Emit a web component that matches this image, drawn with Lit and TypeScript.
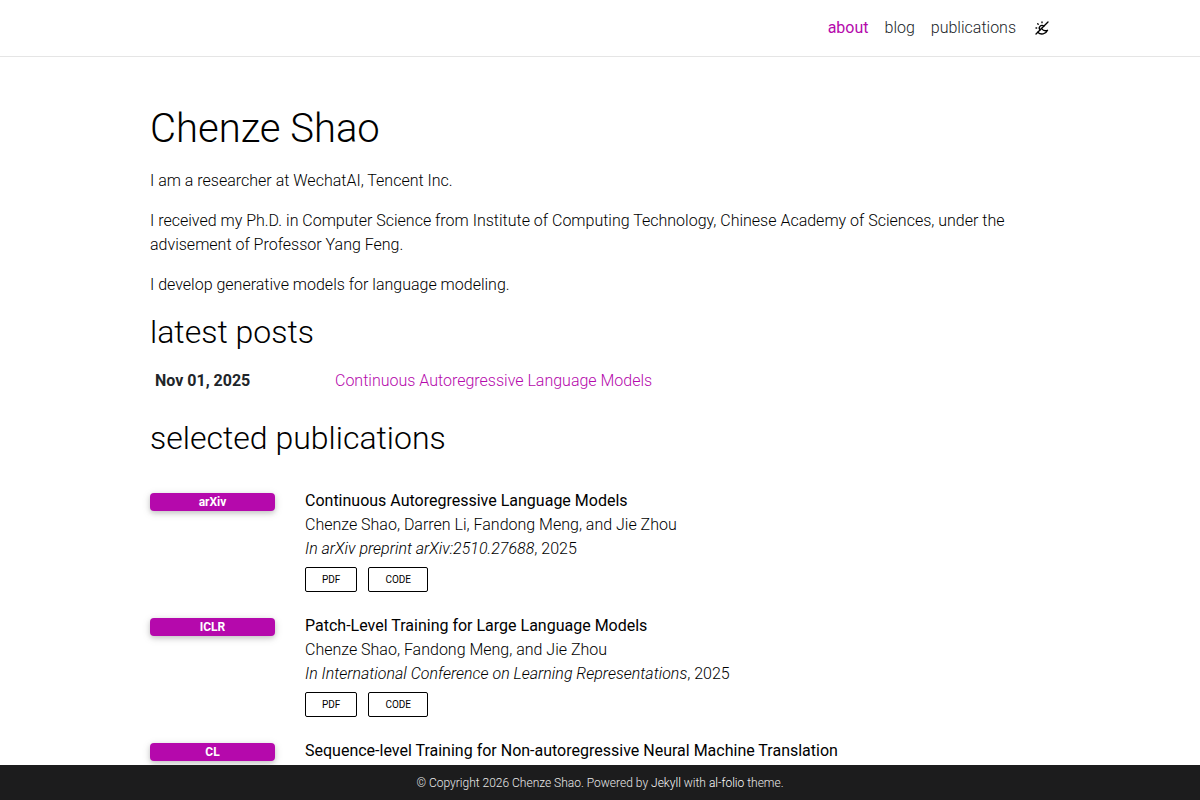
import { LitElement, html, css } from "lit";
import { customElement } from "lit/decorators.js";

interface Publication {
  badge: string;
  title: string;
  authors?: string;
  venue?: string;
  year?: string;
  links?: string[];
}

const publications: Publication[] = [
  {
    badge: "arXiv",
    title: "Continuous Autoregressive Language Models",
    authors: "Chenze Shao, Darren Li, Fandong Meng, and Jie Zhou",
    venue: "In arXiv preprint arXiv:2510.27688",
    year: "2025",
    links: ["PDF", "Code"],
  },
  {
    badge: "ICLR",
    title: "Patch-Level Training for Large Language Models",
    authors: "Chenze Shao, Fandong Meng, and Jie Zhou",
    venue: "In International Conference on Learning Representations",
    year: "2025",
    links: ["PDF", "Code"],
  },
  {
    badge: "CL",
    title: "Sequence-level Training for Non-autoregressive Neural Machine Translation",
  },
];

@customElement("app-root")
export class AppRoot extends LitElement {
  static styles = css`
    :host {
      display: block;
      min-height: 100vh;
      box-sizing: border-box;
      padding-bottom: 35px;
      background: #fff;
      color: #000;
      font: 300 16px/24px Roboto, sans-serif;
    }
    *, *::before { box-sizing: border-box; }
    a { color: #b509ac; text-decoration: none; }
    .container {
      max-width: 930px;
      margin: 0 auto;
      padding: 0 15px;
    }
    .header {
      position: sticky;
      top: 0;
      z-index: 2;
      background: #fff;
      border-bottom: 1px solid rgba(0, 0, 0, 0.1);
    }
    .nav {
      display: flex;
      justify-content: flex-end;
      align-items: center;
      gap: 16px;
      min-height: 56px;
    }
    .nav a { color: #212529; }
    .nav .active { color: #b509ac; font-weight: 400; }
    .toggle {
      display: flex;
      padding: 0;
      margin-left: 2px;
      border: 0;
      background: none;
      color: #000;
      cursor: pointer;
    }
    .toggle svg {
      width: 16px;
      height: 16px;
      fill: none;
      stroke: currentColor;
      stroke-width: 2;
      stroke-linecap: round;
      stroke-linejoin: round;
    }
    .content { padding-top: 48px; }
    h1, h2 { margin: 0; font-weight: 300; }
    h1 { font-size: 40px; line-height: 48px; margin-bottom: 16px; }
    h2 { font-size: 32px; line-height: 38px; }
    p { margin: 0 0 16px; }
    .news {
      width: 100%;
      margin: 13px 0 21px;
      border-collapse: collapse;
      table-layout: fixed;
    }
    .news th, .news td { padding: 5px; text-align: left; }
    .news th { width: 20%; color: #212529; font-weight: 700; }
    .list {
      display: grid;
      gap: 22px;
      list-style: none;
      margin: 32px 0 0;
      padding: 0;
    }
    .entry {
      display: grid;
      grid-template-columns: 125px minmax(0, 1fr);
      column-gap: 30px;
      align-items: start;
    }
    .badge {
      margin-top: 4px;
      border-radius: 4px;
      background: #b509ac;
      color: #fff;
      font-size: 12px;
      line-height: 18px;
      font-weight: 700;
      text-align: center;
      box-shadow: 0 2px 5px rgba(0, 0, 0, 0.16), 0 2px 10px rgba(0, 0, 0, 0.12);
    }
    .title { font-weight: 400; }
    .venue { font-family: "Roboto Light", Roboto, sans-serif; }
    .links { display: flex; gap: 11px; padding-top: 6px; }
    .btn {
      padding: 0 16px;
      border: 1px solid #000;
      border-radius: 2px;
      color: #000;
      font-size: 10px;
      line-height: 23px;
      font-weight: 400;
      text-transform: uppercase;
    }
    footer {
      position: fixed;
      inset: auto 0 0;
      z-index: 2;
      padding: 9px 15px 8px;
      background: #1c1c1d;
      color: #e8e8e8;
      font-size: 12px;
      line-height: 18px;
      text-align: center;
    }
    footer a { color: #fff; }
  `;

  private renderEntry(p: Publication) {
    return html`
      <li class="entry">
        <div class="badge">${p.badge}</div>
        <div>
          <div class="title">${p.title}</div>
          ${p.authors ? html`<div>${p.authors}</div>` : ""}
          ${p.venue ? html`<div><em class="venue">${p.venue}</em>, ${p.year}</div>` : ""}
          ${p.links
            ? html`<div class="links">
                ${p.links.map((l) => html`<a class="btn" href="#">${l}</a>`)}
              </div>`
            : ""}
        </div>
      </li>
    `;
  }

  render() {
    return html`
      <header class="header">
        <nav class="nav container">
          <a class="active" href="#">about</a>
          <a href="#">blog</a>
          <a href="#">publications</a>
          <button class="toggle" type="button" aria-label="Change theme">
            <svg viewBox="0 0 24 24" aria-hidden="true">
              <path d="M9.173 14.83a4 4 0 1 1 5.657 -5.657" />
              <path d="M11.294 12.707l.174 .247a7.5 7.5 0 0 0 8.845 2.492a9 9 0 0 1 -14.671 2.914" />
              <path d="M3 12h1M12 3v1M5.6 5.6l.7 .7M3 21l18 -18" />
            </svg>
          </button>
        </nav>
      </header>
      <main class="container content">
        <h1>Chenze Shao</h1>
        <p>I am a researcher at WechatAI, Tencent Inc.</p>
        <p>
          I received my Ph.D. in Computer Science from Institute of Computing Technology, Chinese
          Academy of Sciences, under the advisement of Professor Yang Feng.
        </p>
        <p>I develop generative models for language modeling.</p>
        <h2>latest posts</h2>
        <table class="news">
          <tbody>
            <tr>
              <th scope="row">Nov 01, 2025</th>
              <td><a href="#">Continuous Autoregressive Language Models</a></td>
            </tr>
          </tbody>
        </table>
        <h2>selected publications</h2>
        <ol class="list">${publications.map((p) => this.renderEntry(p))}</ol>
      </main>
      <footer>
        © Copyright 2026 Chenze Shao. Powered by <a href="#">Jekyll</a> with
        <a href="#">al-folio</a> theme.
      </footer>
    `;
  }
}
